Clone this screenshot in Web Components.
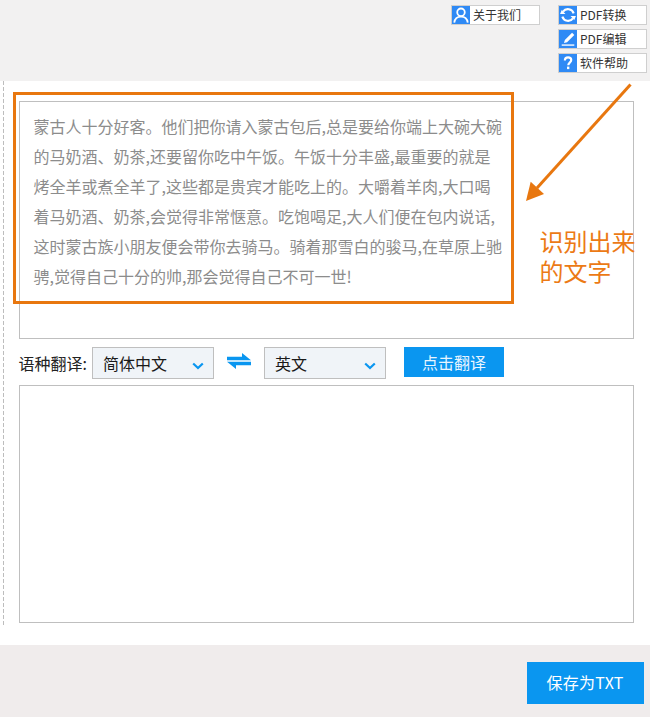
<!DOCTYPE html>
<html lang="zh"><head><meta charset="utf-8"><title>翻译</title>
<style>
html,body{margin:0;padding:0;background:#fff}
body{font-family:"Noto Sans CJK SC","Liberation Sans",sans-serif;width:650px;height:717px;overflow:hidden}
</style></head><body>
<app-shell>
  <tool-button slot="about" icon="user">关于我们</tool-button>
  <tool-button slot="tools" icon="refresh">PDF转换</tool-button>
  <tool-button slot="tools" icon="edit">PDF编辑</tool-button>
  <tool-button slot="tools" icon="help">软件帮助</tool-button>
  <text-panel slot="source" style="height:238px">蒙古人十分好客。他们把你请入蒙古包后,总是要给你端上大碗大碗的马奶酒、奶茶,还要留你吃中午饭。午饭十分丰盛,最重要的就是烤全羊或煮全羊了,这些都是贵宾才能吃上的。大嚼着羊肉,大口喝着马奶酒、奶茶,会觉得非常惬意。吃饱喝足,大人们便在包内说话,这时蒙古族小朋友便会带你去骑马。骑着那雪白的骏马,在草原上驰骋,觉得自己十分的帅,那会觉得自己不可一世!</text-panel>
  <translate-bar slot="bar"></translate-bar>
  <text-panel slot="target" style="height:238px"></text-panel>
  <ocr-callout slot="callout"></ocr-callout>
  <save-button slot="save">保存为TXT</save-button>
</app-shell>
<script>
const ICONS={
 user:'<circle cx="10" cy="7" r="4.2" fill="none" stroke="#fff" stroke-width="2"/><path d="M2.5 18.500c.6-4.500 3.600-6.700 7.500-6.700s6.900 2.200 7.500 6.700" fill="none" stroke="#fff" stroke-width="2"/>',
 refresh:'<path d="M16.300 8.200A6.700 6.700 0 0 0 4.500 6.300" fill="none" stroke="#fff" stroke-width="2.400"/><path d="M3.700 11.800A6.700 6.700 0 0 0 15.500 13.700" fill="none" stroke="#fff" stroke-width="2.400"/><path d="M1.200 9h6L3 4.500zM18.800 11h-6l4.200 4.500z" fill="#fff"/>',
 edit:'<path d="M14.500 3l2.500 2.500-8 8-3.500 1 1-3.500z" fill="#fff"/><rect x="3" y="16" width="14" height="1.500" fill="#fff"/>',
 help:'<path d="M6.500 7.300c0-2.200 1.500-3.500 3.600-3.500s3.500 1.200 3.500 3c0 2.800-3.300 2.800-3.300 5.600" fill="none" stroke="#fff" stroke-width="2.400"/><rect x="8.900" y="14" width="2.600" height="2.800" fill="#fff"/>'
};
function def(name,html,setup){
  customElements.define(name,class extends HTMLElement{
    constructor(){super();const r=this.attachShadow({mode:'open'});r.innerHTML=html;}
    connectedCallback(){setup&&setup.call(this,this.shadowRoot);}
  });
}
def('app-shell',`<style>
:host{display:flex;flex-direction:column;width:650px;height:717px}
header{height:81px;flex:none;background:#f2f1f1;display:flex;align-items:flex-start;padding:5px 3px 0 451px;box-sizing:border-box;gap:18px}
.col{display:flex;flex-direction:column;gap:4px}
main{position:relative;flex:1;background:#fff;padding:20px 16px 0 19px;min-height:0}
main::before{content:"";position:absolute;left:3px;top:0;width:1px;height:544px;background:repeating-linear-gradient(#bdbdbd 0 4px,transparent 4px 6px)}
footer{height:72px;flex:none;background:#f0ecec;display:flex;justify-content:flex-end;align-items:flex-start;padding:17px 6px 0 0;box-sizing:border-box}
</style>
<header><div class="col"><slot name="about"></slot></div><div class="col"><slot name="tools"></slot></div></header>
<main><slot name="source"></slot><slot name="bar"></slot><slot name="target"></slot><slot name="callout"></slot></main>
<footer><slot name="save"></slot></footer>`);
def('tool-button',`<style>
:host{display:flex;align-items:center;width:89px;height:20px;box-sizing:border-box;border:1px solid #cfcfcf;background:#fff;font:12px/18px "Noto Sans CJK SC","Liberation Sans",sans-serif;color:#333;overflow:hidden;white-space:nowrap}
svg{flex:none;width:18px;height:18px;background:#2f8af5;margin-right:3px}
</style><svg viewBox="0 0 20 20"></svg><slot></slot>`,function(r){r.querySelector('svg').innerHTML=ICONS[this.getAttribute('icon')]||'';});
def('text-panel',`<style>
:host{display:block;width:615px;box-sizing:border-box;border:1px solid #bfbfbf;background:#fff;padding:9px 128px 0 13.500px;font:16px/30.100px "Noto Sans CJK SC","Liberation Sans",sans-serif;color:#8c8c8c;overflow:hidden}
</style><slot></slot>`);
def('lang-select',`<style>
:host{display:flex;align-items:center;justify-content:space-between;width:122px;height:32px;box-sizing:border-box;border:1px solid #bfbfbf;background:#f0f4f8;padding:0 9px 0 10px;font:16px "Noto Sans CJK SC","Liberation Sans",sans-serif;color:#1a1a1a}
svg{width:12px;height:8px;margin-top:5px}
</style><slot></slot><svg viewBox="0 0 12 8"><path d="M1.200 1.500L6 6l4.800-4.500" fill="none" stroke="#0a96f0" stroke-width="2.200"/></svg>`);
def('translate-bar',`<style>
:host{display:flex;align-items:flex-start;height:46px;box-sizing:border-box;padding-top:8px;font:16px "Noto Sans CJK SC","Liberation Sans",sans-serif;color:#222}
.l{width:73px;line-height:32px;height:32px;white-space:nowrap;margin-left:-.5px;margin-right:.5px}
.s{flex:none;width:24px;height:16px;margin:6px 13px 0 13px}
button{all:unset;box-sizing:border-box;width:100px;height:30px;margin:0 0 0 18px;background:#0a96f0;color:#e8f5ff;text-align:center;font:16px/29px "Noto Sans CJK SC","Liberation Sans",sans-serif}
</style><span class="l">语种翻译:</span><lang-select>简体中文</lang-select>
<svg class="s" viewBox="0 0 24 16"><path d="M0 7.200h24L15 0v3.800H0zM24 8.800H0l9 7.200v-3.800H24z" fill="#0a96f0"/></svg>
<lang-select>英文</lang-select><button>点击翻译</button>`);
def('ocr-callout',`<style>
:host{display:block}
.frame{position:absolute;left:13px;top:11px;width:501px;height:212px;box-sizing:border-box;border:3px solid #e8770f;pointer-events:none}
svg{position:absolute;left:520px;top:0;width:120px;height:125px}
.t{position:absolute;left:539.500px;top:145px;width:100px;font:24px/30px "Noto Sans CJK SC","Liberation Sans",sans-serif;color:#ec7a15}
</style><div class="frame"></div>
<svg viewBox="0 0 120 125"><path d="M110.500 3.500L17 107" stroke="#e8770f" stroke-width="3" fill="none"/><path d="M6 120L10.700 100.700L24 113z" fill="#e8770f"/></svg>
<div class="t">识别出来的文字</div>`);
def('save-button',`<style>
:host{display:flex;align-items:center;justify-content:center;width:117px;height:42px;box-sizing:border-box;padding:0 1px 2px 0;background:#0a96f0;color:#fff;font:16px "Noto Sans CJK SC","Liberation Sans",sans-serif;letter-spacing:.25px}
</style><slot></slot>`);
</script></body></html>
